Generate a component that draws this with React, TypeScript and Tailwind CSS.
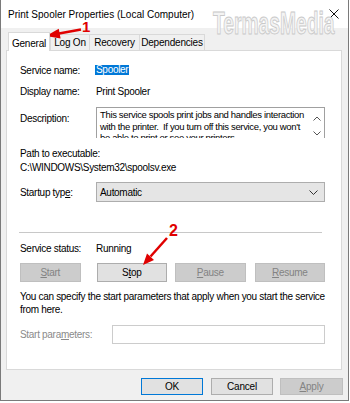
import React from "react";

const F = "font-['Liberation_Sans',Arial,sans-serif]";

function Btn({
  children,
  disabled,
  primary,
  className = "",
}: {
  children: React.ReactNode;
  disabled?: boolean;
  primary?: boolean;
  className?: string;
}) {
  const base = disabled
    ? "bg-[#cccccc] border-[#bfbfbf] text-[#838383]"
    : primary
    ? "bg-[#e1e1e1] border-[#0078d7] text-black"
    : "bg-[#e1e1e1] border-[#adadad] text-black";
  return (
    <div
      className={`flex items-center justify-center border ${base} ${className}`}
    >
      {children}
    </div>
  );
}

export default function App() {
  return (
    <div className={`w-[350px] h-[403px] bg-white ${F} text-[10px] text-black relative overflow-hidden`}>
      <div className="w-[349px] h-[401px] bg-[#f0f0f0] border-l border-r border-b border-[#7a7a7a] flex flex-col">
        {/* title bar */}
        <div className="h-[28px] bg-white flex items-center justify-between pl-[7px] pr-[9px] shrink-0">
          <span className="text-[10px] text-black">Print Spooler Properties (Local Computer)</span>
          <svg width="10" height="10" viewBox="0 0 10 10">
            <path d="M0.5 0.5 L9.5 9.5 M9.5 0.5 L0.5 9.5" stroke="#111" strokeWidth="1" />
          </svg>
        </div>

        {/* tabs */}
        <div className="h-[22px] flex items-end pl-[7px] shrink-0 tracking-[-0.2px]">
          <div className="relative z-10 w-[42px] h-[19px] -mb-px bg-white border border-b-0 border-[#d9d9d9] flex items-start justify-center pt-[3px]">
            General
          </div>
          <div className="w-[40px] h-[16px] bg-[#f0f0f0] border border-b-0 border-[#d9d9d9] flex items-center justify-center">
            Log On
          </div>
          <div className="w-[51px] h-[16px] -ml-px bg-[#f0f0f0] border border-b-0 border-[#d9d9d9] flex items-center justify-center">
            Recovery
          </div>
          <div className="w-[66px] h-[16px] -ml-px bg-[#f0f0f0] border border-b-0 border-[#d9d9d9] flex items-center justify-center">
            Dependencies
          </div>
        </div>

        {/* panel */}
        <div className="ml-[5px] w-[336px] h-[320px] bg-white border border-[#d9d9d9] flex flex-col pl-[13px] pr-[16px] tracking-[-0.3px] shrink-0">
          <div className="h-[14px] mt-[12px] flex items-center">
            <span className="w-[76px]">Service name:</span>
            <span className="bg-[#0078d7] text-white leading-[10px] h-[10px] px-[1px] -ml-px">Spooler</span>
          </div>
          <div className="h-[14px] mt-[7px] flex items-center">
            <span className="w-[76px]">Display name:</span>
            <span>Print Spooler</span>
          </div>
          <div className="h-[31px] mt-[9px] flex">
            <span className="w-[76px] pt-[4px]">Description:</span>
            <div className="flex-1 border border-b-0 border-[#a0a0a0] overflow-hidden flex">
              <div className="flex-1 pl-[3px] pt-[1px] leading-[11.5px] text-[9.5px] tracking-[-0.35px] whitespace-nowrap overflow-hidden">
                This service spools print jobs and handles interaction
                <br />
                with the printer.&nbsp; If you turn off this service, you won't
                <br />
                be able to print or see your printers.
              </div>
              <div className="w-[14px] flex flex-col items-center justify-between pt-[8px] pb-[2px]">
                <svg width="8" height="5" viewBox="0 0 8 5">
                  <path d="M0.5 4.5 L4 1 L7.5 4.5" stroke="#555" strokeWidth="1" fill="none" />
                </svg>
                <svg width="8" height="5" viewBox="0 0 8 5">
                  <path d="M0.5 0.5 L4 4 L7.5 0.5" stroke="#555" strokeWidth="1" fill="none" />
                </svg>
              </div>
            </div>
          </div>
          <div className="h-[14px] mt-[8px] flex items-center">Path to executable:</div>
          <div className="h-[14px] flex items-center">C:\WINDOWS\System32\spoolsv.exe</div>
          <div className="h-[20px] mt-[8px] flex items-center">
            <span className="w-[76px]">
              Startup typ<span className="underline">e</span>:
            </span>
            <div className="flex-1 h-[20px] bg-[#e5e5e5] border border-[#adadad] flex items-center justify-between pl-[3px] pr-[6px]">
              <span>Automatic</span>
              <svg width="9" height="5" viewBox="0 0 9 5">
                <path d="M0.5 0.5 L4.5 4.5 L8.5 0.5" stroke="#333" strokeWidth="1" fill="none" />
              </svg>
            </div>
          </div>
          <div className="h-px bg-[#c8c8c8] mt-[30px] mr-[3px] -ml-px" />
          <div className="h-[14px] mt-[8px] flex items-center">
            <span className="w-[76px]">Service status:</span>
            <span>Running</span>
          </div>
          <div className="h-[19px] mt-[8px] flex">
            <Btn disabled className="w-[61px]">
              <span><span className="underline">S</span>tart</span>
            </Btn>
            <Btn className="w-[71px] ml-[16px]">
              <span>S<span className="underline">t</span>op</span>
            </Btn>
            <Btn disabled className="w-[71px] ml-[8px]">
              <span><span className="underline">P</span>ause</span>
            </Btn>
            <Btn disabled className="w-[71px] ml-[9px]">
              <span><span className="underline">R</span>esume</span>
            </Btn>
          </div>
          <div className="mt-[9px] leading-[12.5px]">
            You can specify the start parameters that apply when you start the service
            <br />
            from here.
          </div>
          <div className="h-[19px] mt-[9px] flex items-center">
            <span className="w-[92px] text-[#8a8a8a]">
              Start para<span className="underline">m</span>eters:
            </span>
            <div className="flex-1 h-[19px] bg-white border border-[#cccccc]" />
          </div>
        </div>

        {/* footer */}
        <div className="flex justify-end pr-[5px] mt-[8px] tracking-[-0.2px]">
          <Btn primary className="w-[62px] h-[17px]">OK</Btn>
          <Btn className="w-[62px] h-[17px] ml-[8px]">Cancel</Btn>
          <Btn disabled className="w-[63px] h-[17px] ml-[7px]">
            <span><span className="underline">A</span>pply</span>
          </Btn>
        </div>
      </div>

      {/* watermark */}
      <div className="absolute left-[213px] top-[6px] text-[31px] font-bold leading-[36px] text-[#f4f4f4] [-webkit-text-stroke:1px_#c9c9c9] scale-x-[0.62] origin-left whitespace-nowrap tracking-[0px] pointer-events-none">
        TermasMedia
      </div>

      {/* annotations */}
      <svg className="absolute inset-0 pointer-events-none" width="350" height="403" viewBox="0 0 350 403">
        <line x1="81" y1="29.5" x2="59" y2="33.5" stroke="#e00000" strokeWidth="2.5" />
        <polygon points="46,36 60.6,38.4 58.8,28.8" fill="#e00000" />
        <line x1="167" y1="238" x2="150.5" y2="256.5" stroke="#e00000" strokeWidth="2.5" />
        <polygon points="143,265 154,260 147,253.5" fill="#e00000" />
      </svg>
      <span className="absolute left-[82px] top-[19px] text-[15px] font-bold text-[#e00000] leading-[16px]">1</span>
      <span className="absolute left-[169px] top-[222px] text-[16px] font-bold text-[#e00000] leading-[17px]">2</span>
    </div>
  );
}
